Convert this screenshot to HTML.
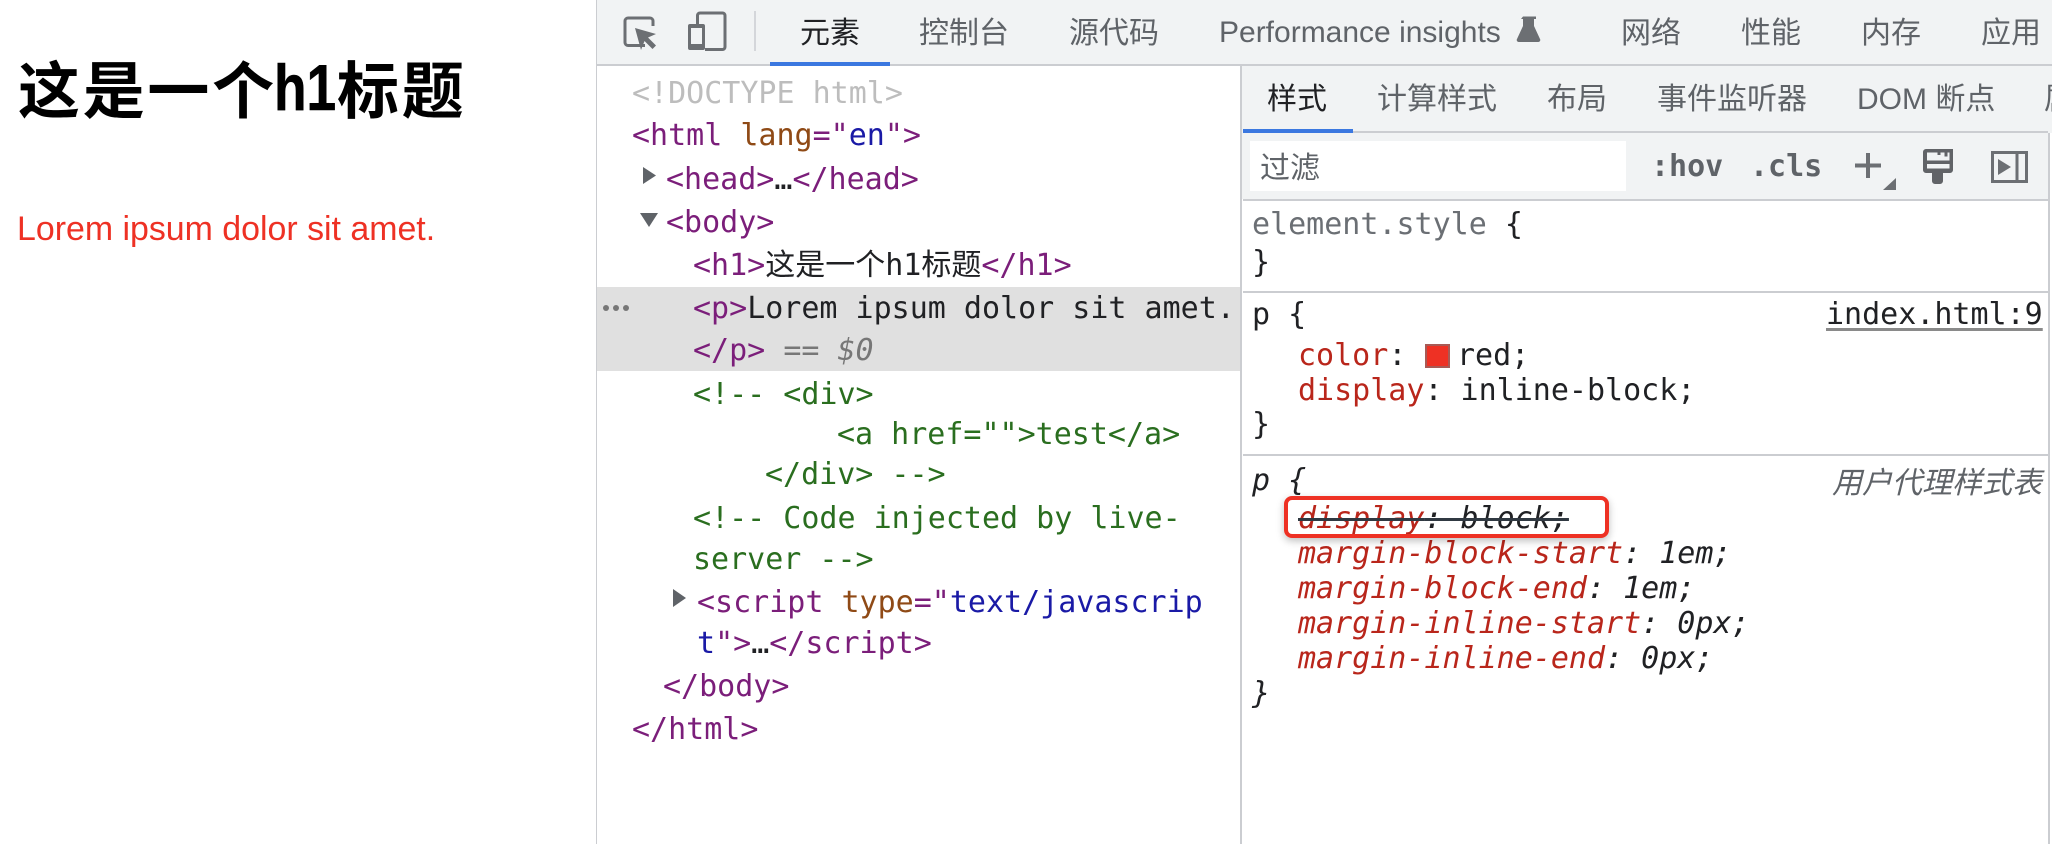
<!DOCTYPE html>
<html lang="zh"><head><meta charset="utf-8"><title>DevTools</title>
<style>
*{box-sizing:border-box}
html,body{margin:0;padding:0;background:#fff;width:2052px;height:844px;overflow:hidden}
.a{position:absolute}
.m{position:absolute;white-space:pre;font:30px/40px "DejaVu Sans Mono","Noto Sans CJK SC",monospace;color:#202124}
.t{position:absolute;white-space:pre;font:30px/40px "Noto Sans CJK SC","Liberation Sans",sans-serif;color:#5f6368}
.l{font-family:"Liberation Sans","Noto Sans CJK SC",sans-serif}
.g{color:#7b1e7a}.n{color:#8f4a16}.v{color:#1a1aa6}.c{color:#2a6e1f}
.r{color:#b9261b}.i{font-style:italic}
</style></head><body>
<div class="a" style="left:0;top:0;width:2052px;height:844px;overflow:hidden">

<!-- page -->
<div class="a" style="left:18px;top:41px;font:bold 62px/90px 'Noto Sans CJK SC',sans-serif;letter-spacing:2.7px;color:#000;white-space:pre">这是一个</div>
<div class="a" style="left:274px;top:48px;font:bold 65px/80px 'Liberation Sans',sans-serif;color:#000;white-space:pre;transform:scaleX(.82);transform-origin:0 50%;-webkit-text-stroke:.6px #000">h1</div>
<div class="a" style="left:337px;top:41px;font:bold 62px/90px 'Noto Sans CJK SC',sans-serif;letter-spacing:2.7px;color:#000;white-space:pre">标题</div>
<div class="a" style="left:17px;top:209px;font:33.9px/40px 'Liberation Sans',sans-serif;color:#ee3124;white-space:pre">Lorem ipsum dolor sit amet.</div>

<!-- panel structure -->
<div class="a" style="left:596px;top:0;width:1px;height:844px;background:#cbcdd1"></div>
<div class="a" style="left:597px;top:0;width:1455px;height:64px;background:#f1f3f4"></div>
<div class="a" style="left:597px;top:64px;width:1455px;height:2px;background:#cbcdd1"></div>
<div class="a" style="left:770px;top:62px;width:120px;height:4px;background:#3b78e0"></div>
<div class="a" style="left:754px;top:11px;width:2px;height:40px;background:#d4d6da"></div>

<!-- top tabs -->
<div class="t" style="left:800px;top:10px;color:#202124">元素</div>
<div class="t" style="left:919px;top:10px">控制台</div>
<div class="t" style="left:1069px;top:10px">源代码</div>
<div class="t l" style="left:1219px;top:13px">Performance insights</div>
<div class="t" style="left:1621px;top:10px">网络</div>
<div class="t" style="left:1741px;top:10px">性能</div>
<div class="t" style="left:1861px;top:10px">内存</div>
<div class="t" style="left:1981px;top:10px">应用</div>

<!-- dom tree -->
<div class="a" style="left:597px;top:287px;width:643px;height:84px;background:#e0e0e0"></div>
<div class="a" style="left:1240px;top:66px;width:2px;height:778px;background:#cbcdd1"></div>
<svg class="a" style="left:600px;top:300px" width="32" height="16"><circle cx="6" cy="8" r="3" fill="#777"/><circle cx="16" cy="8" r="3" fill="#777"/><circle cx="26" cy="8" r="3" fill="#777"/></svg>

<div class="m" style="left:632px;top:74px;color:#bdbdbd">&lt;!DOCTYPE html&gt;</div>
<div class="m" style="left:632px;top:116px"><span class="g">&lt;html</span> <span class="n">lang</span><span class="g">="</span><span class="v">en</span><span class="g">"&gt;</span></div>
<div class="m" style="left:666px;top:160px"><span class="g">&lt;head&gt;</span>…<span class="g">&lt;/head&gt;</span></div>
<div class="m" style="left:666px;top:203px" ><span class="g">&lt;body&gt;</span></div>
<div class="m" style="left:693px;top:246px"><span class="g">&lt;h1&gt;</span>这是一个h1标题<span class="g">&lt;/h1&gt;</span></div>
<div class="m" style="left:693px;top:289px"><span class="g">&lt;p&gt;</span>Lorem ipsum dolor sit amet.</div>
<div class="m" style="left:693px;top:331px"><span class="g">&lt;/p&gt;</span> <span style="color:#777">==</span> <span class="i" style="color:#777">$0</span></div>
<div class="m c" style="left:693px;top:375px">&lt;!-- &lt;div&gt;</div>
<div class="m c" style="left:837px;top:415px">&lt;a href=""&gt;test&lt;/a&gt;</div>
<div class="m c" style="left:765px;top:455px">&lt;/div&gt; --&gt;</div>
<div class="m c" style="left:693px;top:499px">&lt;!-- Code injected by live-</div>
<div class="m c" style="left:693px;top:540px">server --&gt;</div>
<div class="m" style="left:697px;top:583px"><span class="g">&lt;script</span> <span class="n">type</span><span class="g">="</span><span class="v">text/javascrip</span></div>
<div class="m" style="left:697px;top:624px"><span class="v">t</span><span class="g">"&gt;</span>…<span class="g">&lt;/script&gt;</span></div>
<div class="m g" style="left:663px;top:667px">&lt;/body&gt;</div>
<div class="m g" style="left:632px;top:710px">&lt;/html&gt;</div>

<!-- sidebar -->
<div class="a" style="left:1242px;top:66px;width:810px;height:133px;background:#f1f3f4"></div>
<div class="a" style="left:1243px;top:131px;width:805px;height:2px;background:#cbcdd1"></div>
<div class="a" style="left:1243px;top:129px;width:110px;height:4px;background:#3b78e0"></div>
<div class="t" style="left:1267px;top:76px;color:#202124">样式</div>
<div class="t" style="left:1377px;top:76px">计算样式</div>
<div class="t" style="left:1547px;top:76px">布局</div>
<div class="t" style="left:1657px;top:76px">事件监听器</div>
<div class="t l" style="left:1857px;top:80px">DOM 断点</div>
<div class="t" style="left:2044px;top:76px">属性</div>
<div class="a" style="left:2048px;top:133px;width:4px;height:711px;background:#fff"></div>
<div class="a" style="left:2048px;top:133px;width:2px;height:711px;background:#cbcdd1"></div>

<div class="a" style="left:1250px;top:141px;width:376px;height:50px;background:#fff"></div>
<div class="t" style="left:1260px;top:145px">过滤</div>
<div class="m" style="left:1651px;top:147px;color:#5f6368;font-weight:bold">:hov</div>
<div class="m" style="left:1750px;top:147px;color:#5f6368;font-weight:bold">.cls</div>
<div class="a" style="left:1243px;top:199px;width:805px;height:2px;background:#cbcdd1"></div>
<div class="a" style="left:1243px;top:291px;width:805px;height:2px;background:#cbcdd1"></div>
<div class="a" style="left:1243px;top:454px;width:805px;height:2px;background:#cbcdd1"></div>

<div class="m" style="left:1252px;top:205px"><span style="color:#6b6f74">element.style</span> {</div>
<div class="m" style="left:1252px;top:243px">}</div>

<div class="m" style="left:1252px;top:295px">p {</div>
<div class="m" style="left:1826px;top:295px;text-decoration:underline;text-decoration-color:#8a8a8a;text-underline-offset:4px;text-decoration-thickness:3px">index.html:9</div>
<div class="m" style="left:1298px;top:336px"><span class="r">color</span>:</div>
<div class="a" style="left:1425px;top:344px;width:25px;height:24px;background:#ee3124;border:2px solid #a85a55"></div>
<div class="m" style="left:1457px;top:336px">red;</div>
<div class="m" style="left:1298px;top:371px"><span class="r">display</span>: inline-block;</div>
<div class="m" style="left:1252px;top:405px">}</div>

<div class="m i" style="left:1252px;top:461px">p {</div>
<div class="t i" style="left:1832px;top:460px">用户代理样式表</div>
<div class="m i" style="left:1298px;top:499px;text-decoration:line-through;text-decoration-color:#303942;text-decoration-thickness:3px"><span class="r">display</span>: block;</div>
<div class="m i" style="left:1298px;top:534px"><span class="r">margin-block-start</span>: 1em;</div>
<div class="m i" style="left:1298px;top:569px"><span class="r">margin-block-end</span>: 1em;</div>
<div class="m i" style="left:1298px;top:604px"><span class="r">margin-inline-start</span>: 0px;</div>
<div class="m i" style="left:1298px;top:639px"><span class="r">margin-inline-end</span>: 0px;</div>
<div class="m i" style="left:1252px;top:674px">}</div>

<div class="a" style="left:1284px;top:496px;width:325px;height:42px;border:4px solid #ee3124;border-radius:8px;box-shadow:0 3px 8px rgba(0,0,0,.25)"></div>

<!-- icons -->
<svg class="a" style="left:0;top:0" width="2052" height="844" fill="none">
<path d="M645 45.500H628a3 3 0 0 1-3-3V21a3 3 0 0 1 3-3h22a3 3 0 0 1 3 3v5" stroke="#6c6f73" stroke-width="3"/>
<path d="M635 28l21 6-8 3.500 8 8-3.500 3.500-8-8-3.500 9z" fill="#6c6f73"/>
<path d="M697.500 24V15.500a2.500 2.500 0 0 1 2.500-2.500h22.500a2.500 2.500 0 0 1 2.500 2.500V47a2.500 2.500 0 0 1-2.500 2.500H705" stroke="#6c6f73" stroke-width="3"/>
<path d="M690 24h13a2 2 0 0 1 2 2v22a2 2 0 0 1-2 2h-13a2 2 0 0 1-2-2V26a2 2 0 0 1 2-2zM691 28v16h11V28z" fill="#6c6f73" fill-rule="evenodd"/>
<path d="M1523 16.500h13v2.500h-2v7l6 13a2 2 0 0 1-2 3h-19a2 2 0 0 1-2-3l6-13v-7h-2z" fill="#6c6f73"/>
<path d="M1855 163.500h26v4h-26zM1866 153h4v25h-4z" fill="#6c6f73"/>
<path d="M1883 190l13-12v12z" fill="#6c6f73"/>
<path d="M1926 149h27v21a3 3 0 0 1-3 3h-7v8a3 3 0 0 1-3 3h-5a3 3 0 0 1-3-3v-8h-6a3 3 0 0 1-3-3v-18a3 3 0 0 1 3-3zM1927 152.500v8h22.500v-8h-2v4h-3v-4h-4v2.500h-3v-2.500zM1927 164v4.500h22.500V164z" fill="#616367" fill-rule="evenodd"/>
<path d="M1992.500 152.500h34v29h-34zM2017 152v30" stroke="#6c6f73" stroke-width="3"/>
<path d="M1998 159l13 8-13 8z" fill="#6c6f73"/>
<path d="M643 167l13 8.500-13 8.500zM640 213h18l-9 14zM673 589l13 9-13 9z" fill="#5f6368"/>
</svg>
</div>
</body></html>
